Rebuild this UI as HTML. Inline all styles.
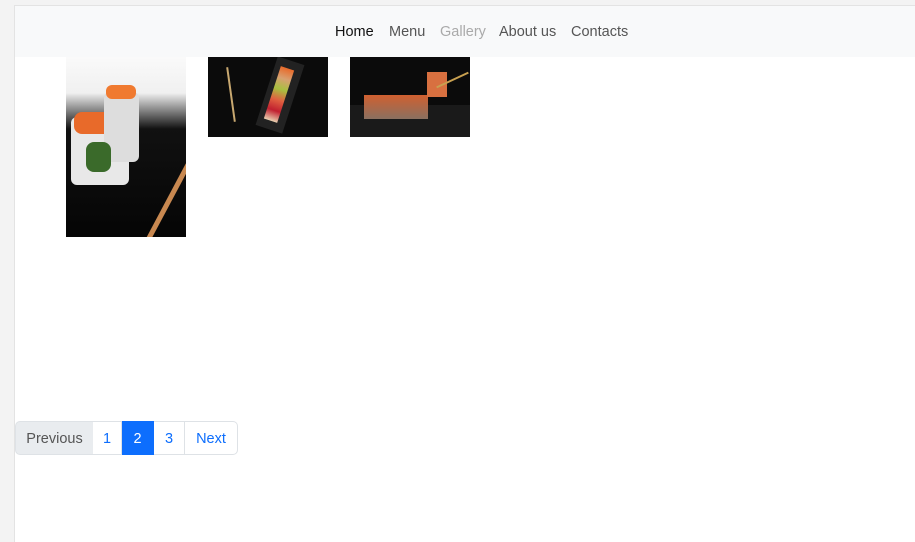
<!DOCTYPE html>
<html><head><style>
body{margin:0;width:915px;height:541px;background:#f3f3f3;font-family:"Liberation Sans",sans-serif;overflow:hidden;position:relative}
.card{position:absolute;left:14px;top:5px;width:901px;height:536px;background:#fff;border-left:1px solid #e3e3e3;border-top:1px solid #e3e3e3}
.nav{position:absolute;left:15px;top:6px;width:900px;height:51px;background:#f8f9fa}
.nav span{position:absolute;top:18px;font-size:14.5px;color:#555}
.im{position:absolute;background:#0b0b0b;overflow:hidden}
.pg{position:absolute;top:421px;height:32px;border:1px solid #dee2e6;border-left:none;font-size:14.5px;line-height:35px;text-align:center;color:#0d6efd;background:#fff;box-sizing:content-box}
</style></head><body>
<div class="card"></div>
<div class="nav">
<span style="left:320px;color:#111">Home</span>
<span style="left:374px">Menu</span>
<span style="left:425px;color:#aaa">Gallery</span>
<span style="left:484px">About us</span>
<span style="left:556px">Contacts</span>
</div>
<div class="im" style="left:66px;top:57px;width:120px;height:180px;background:linear-gradient(#fafafa 0,#f0f0f0 20%,#111 40%,#050505)">
<div style="position:absolute;left:5px;top:60px;width:58px;height:68px;background:#e8e8e8;border-radius:6px"></div>
<div style="position:absolute;left:8px;top:55px;width:50px;height:22px;background:#e86a2a;border-radius:8px"></div>
<div style="position:absolute;left:38px;top:35px;width:35px;height:70px;background:#ddd;border-radius:6px"></div>
<div style="position:absolute;left:40px;top:28px;width:30px;height:14px;background:#f07a30;border-radius:6px"></div>
<div style="position:absolute;left:20px;top:85px;width:25px;height:30px;background:#3a6a2a;border-radius:8px"></div>
<div style="position:absolute;left:105px;top:60px;width:5px;height:150px;background:#c88850;transform:rotate(28deg)"></div>
</div>
<div class="im" style="left:208px;top:57px;width:120px;height:80px">
<div style="position:absolute;left:58px;top:2px;width:28px;height:72px;background:#222;transform:rotate(18deg)"></div>
<div style="position:absolute;left:64px;top:10px;width:14px;height:55px;background:linear-gradient(#e86a2a,#d8a070,#a8c040,#e06040,#c02030,#e8d0b0);transform:rotate(18deg)"></div>
<div style="position:absolute;left:22px;top:10px;width:2px;height:55px;background:#c8a870;transform:rotate(-8deg)"></div>
</div>
<div class="im" style="left:350px;top:57px;width:120px;height:80px">
<div style="position:absolute;left:0;top:48px;width:120px;height:32px;background:#1a1a1a"></div>
<div style="position:absolute;left:14px;top:38px;width:64px;height:24px;background:linear-gradient(#d06030,#8a7060)"></div>
<div style="position:absolute;left:77px;top:15px;width:20px;height:25px;background:#d87040"></div>
<div style="position:absolute;left:85px;top:22px;width:35px;height:2px;background:#c8a050;transform:rotate(-25deg)"></div>
</div>
<div class="pg" style="left:15px;width:77px;border-left:1px solid #dee2e6;border-radius:5px 0 0 5px;background:#e9ecef;color:#555">Previous</div>
<div class="pg" style="left:93px;width:28px">1</div>
<div class="pg" style="left:122px;width:31px;background:#0d6efd;color:#fff;border-color:#0d6efd">2</div>
<div class="pg" style="left:154px;width:30px">3</div>
<div class="pg" style="left:185px;width:52px;border-radius:0 5px 5px 0">Next</div>
</body></html>
